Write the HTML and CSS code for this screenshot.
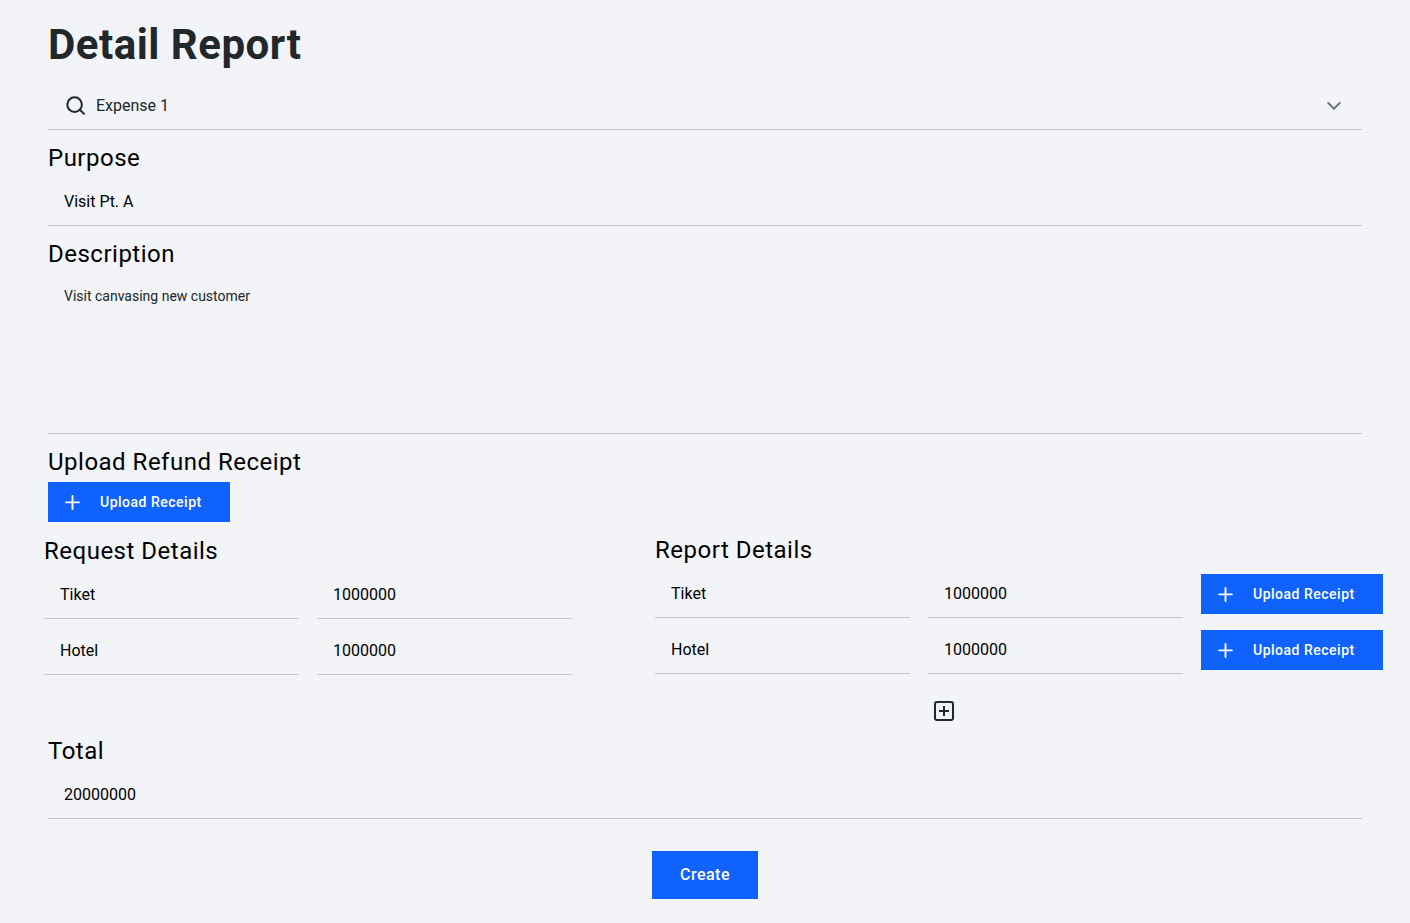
FILE: index.html
```html
<!DOCTYPE html>
<html lang="en">
<head>
<meta charset="utf-8">
<title>Detail Report</title>
<link rel="stylesheet" href="styles.css">
</head>
<body>
<main class="page">
  <h1 class="title">Detail Report</h1>
  <div class="select">
    <svg class="icon" width="24" height="24" viewBox="0 0 24 24" fill="none" stroke="#21272a" stroke-width="2"><circle cx="10.6" cy="11.6" r="7.3"/><path d="M15.8 16.8L20.6 21.4"/></svg>
    <span class="select-value">Expense 1</span>
    <svg class="chevron" width="16" height="10" viewBox="0 0 16 10" fill="none" stroke="#697077" stroke-width="2"><path d="M1.7 2.4L8 8.6L14.3 2.4"/></svg>
  </div>
  <h2 class="heading">Purpose</h2>
  <div class="field">Visit Pt. A</div>
  <h2 class="heading">Description</h2>
  <div class="field area">Visit canvasing new customer</div>
  <h2 class="heading">Upload Refund Receipt</h2>
  <button class="upload refund"><svg class="plus" width="16" height="16" viewBox="0 0 16 16" stroke="#fff" stroke-width="1.9" stroke-linecap="round"><path d="M7.5 2V15M1.2 8.4H13.9"/></svg><span>Upload Receipt</span></button>
  <div class="details">
    <section class="request">
      <h2 class="heading">Request Details</h2>
      <div class="row"><div class="field">Tiket</div><div class="field">1000000</div></div>
      <div class="row"><div class="field">Hotel</div><div class="field">1000000</div></div>
    </section>
    <section class="report">
      <h2 class="heading">Report Details</h2>
      <div class="row"><div class="field">Tiket</div><div class="field">1000000</div><button class="upload"><svg class="plus" width="16" height="16" viewBox="0 0 16 16" stroke="#fff" stroke-width="1.9" stroke-linecap="round"><path d="M7.5 2V15M1.2 8.4H13.9"/></svg><span>Upload Receipt</span></button></div>
      <div class="row"><div class="field">Hotel</div><div class="field">1000000</div><button class="upload"><svg class="plus" width="16" height="16" viewBox="0 0 16 16" stroke="#fff" stroke-width="1.9" stroke-linecap="round"><path d="M7.5 2V15M1.2 8.4H13.9"/></svg><span>Upload Receipt</span></button></div>
      <svg class="add" width="20" height="20" viewBox="0 0 20 20" fill="none" stroke="#21272a" stroke-width="2"><rect x="1" y="1" width="18" height="18" rx="2"/><path d="M10 5V15M5 10H15"/></svg>
    </section>
  </div>
  <h2 class="heading">Total</h2>
  <div class="field">20000000</div>
  <button class="create">Create</button>
</main>
</body>
</html>
```

FILE: styles.css
```css
* { box-sizing: border-box; }
body { margin: 0; background: #f2f4f8; font-family: Roboto, "Liberation Sans", sans-serif; color: #000; }
.page { display: flex; flex-direction: column; width: 1410px; height: 923px; padding: 22px 48px 0; overflow: hidden; }
.title { margin: 0 0 13px; font-size: 42px; line-height: 46px; font-weight: 700; color: #21272a; letter-spacing: 0.5px; }
.select { display: flex; align-items: center; width: 1314px; height: 49px; padding: 0 20px 0 16px; border-bottom: 1px solid #c1c7cd; margin-bottom: 12px; }
.select-value { flex: 1; margin-left: 8px; font-size: 16px; color: #21272a; }
.heading { margin: 0; font-size: 24px; line-height: 32px; font-weight: 400; letter-spacing: 0.5px; }
.field { height: 48px; margin: 4px 0 12px; padding: 0 16px; font-size: 16px; line-height: 47px; border-bottom: 1px solid #c1c7cd; }
.area { height: 160px; padding-top: 12px; font-size: 14px; line-height: 20px; color: #21272a; }
.upload { display: flex; align-items: center; width: 182px; height: 40px; flex: none; padding: 0 17px; border: 0; background: #0f62fe; color: #fff; font: 500 14px/20px Roboto, "Liberation Sans", sans-serif; letter-spacing: 0.5px; }
.refund { margin-top: 4px; }
.plus { margin-right: 19px; }
.details { display: flex; height: 201px; margin: 12px -21px 0 -4px; }
.request { width: 528px; margin: 1px 83px 0 0; }
.report { width: 728px; }
.row { display: flex; gap: 18px; height: 56px; }
.row .field { width: 255px; height: 48px; margin: 4px 0 0; }
.row .upload { margin-top: 8px; }
.add { display: block; margin: 23px 0 0 279px; }
.create { align-self: center; width: 106px; height: 48px; margin-top: 20px; border: 0; background: #0f62fe; color: #fff; font: 500 16px/20px Roboto, "Liberation Sans", sans-serif; letter-spacing: 0.5px; }
```
